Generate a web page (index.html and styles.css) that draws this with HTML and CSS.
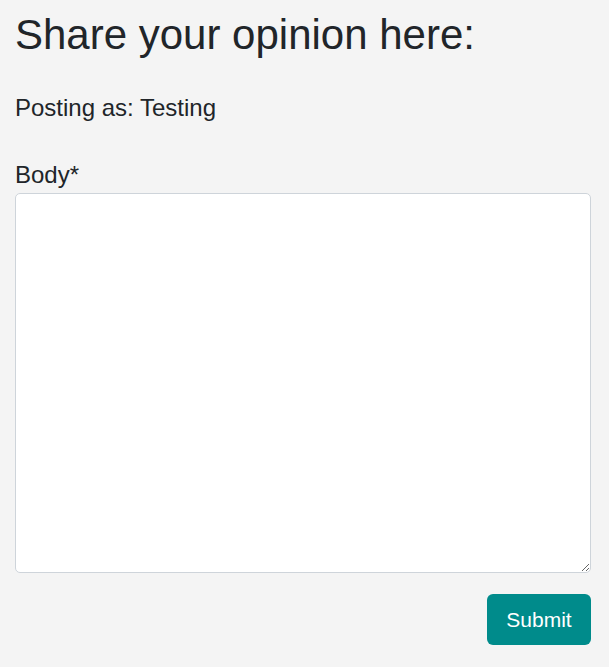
FILE: index.html
```html
<!DOCTYPE html>
<html lang="en">
<head>
<meta charset="utf-8">
<title>Share your opinion</title>
<link rel="stylesheet" href="styles.css">
</head>
<body>
<main class="page">
  <h1 class="title">Share your opinion here:</h1>
  <p class="posting">Posting as: Testing</p>
  <form class="form">
    <label class="label" for="body">Body*</label>
    <textarea class="body-input" id="body" name="body"></textarea>
    <div class="actions">
      <button type="button" class="submit">Submit</button>
    </div>
  </form>
</main>
</body>
</html>
```
FILE: styles.css
```css
html, body {
  margin: 0;
  padding: 0;
  background: #f4f4f4;
}
body {
  font-family: "Liberation Sans", Arial, sans-serif;
  color: #212529;
}
.page {
  padding: 10px 18px 0 15px;
}
.title {
  margin: 0;
  font-size: 42px;
  line-height: 50px;
  font-weight: 400;
}
.posting {
  margin: 34px 0 0;
  font-size: 24px;
  line-height: 28px;
}
.form {
  margin-top: 39px;
  display: flex;
  flex-direction: column;
}
.label {
  font-size: 24px;
  line-height: 28px;
}
.body-input {
  margin-top: 4px;
  box-sizing: border-box;
  width: 100%;
  height: 380px;
  border: 1px solid #ced4da;
  border-radius: 5px;
  background: #fff;
  padding: 8px 12px;
  font-family: inherit;
  font-size: 21px;
  color: #212529;
}
.actions {
  display: flex;
  justify-content: flex-end;
  margin-top: 21px;
}
.submit {
  box-sizing: border-box;
  width: 104px;
  height: 51px;
  border: 0;
  border-radius: 6px;
  background: #008b8b;
  color: #fff;
  font-family: inherit;
  font-size: 21px;
  padding: 0;
}
```
